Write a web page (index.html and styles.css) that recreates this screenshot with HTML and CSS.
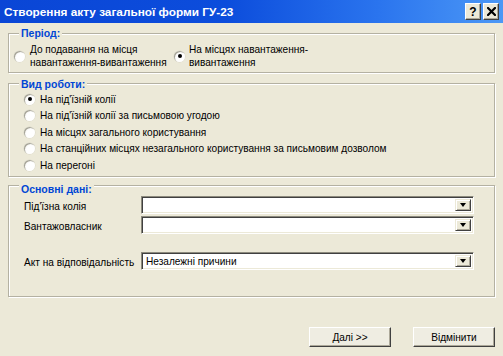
FILE: index.html
```html
<!DOCTYPE html>
<html lang="uk">
<head>
<meta charset="utf-8">
<title>Створення акту загальної форми ГУ-23</title>
<link rel="stylesheet" href="styles.css">
</head>
<body>
<div class="window">
  <div class="titlebar">
    <span class="title">Створення акту загальної форми ГУ-23</span>
    <div class="tb-buttons">
      <span class="tb-btn">?</span>
      <span class="tb-btn"><svg width="9" height="9" viewBox="0 0 9 9"><path d="M1 1L8 8M8 1L1 8" stroke="#000" stroke-width="2.2" stroke-linecap="square"/></svg></span>
    </div>
  </div>
  <div class="content">
    <div class="group g-period">
      <div class="legend">Період:</div>
      <div class="period-row">
        <div class="radio-item p1"><span class="radio"></span><span class="rtext">До подавання на місця<br>навантаження-вивантаження</span></div>
        <div class="radio-item p2"><span class="radio checked"></span><span class="rtext">На місцях навантаження-<br>вивантаження</span></div>
      </div>
    </div>
    <div class="group g-work">
      <div class="legend">Вид роботи:</div>
      <div class="options">
        <div class="radio-item opt"><span class="radio checked"></span><span>На під'їзній колії</span></div>
        <div class="radio-item opt"><span class="radio"></span><span>На під'їзній колії за письмовою угодою</span></div>
        <div class="radio-item opt"><span class="radio"></span><span>На місцях загального користування</span></div>
        <div class="radio-item opt"><span class="radio"></span><span>На станційних місцях незагального користування за письмовим дозволом</span></div>
        <div class="radio-item opt"><span class="radio"></span><span>На перегоні</span></div>
      </div>
    </div>
    <div class="group g-main">
      <div class="legend">Основні дані:</div>
      <div class="fields">
        <div class="field"><span class="flabel">Під'їзна колія</span><div class="combo"><span class="ctext"></span><span class="dd"></span></div></div>
        <div class="field"><span class="flabel">Вантажовласник</span><div class="combo"><span class="ctext"></span><span class="dd"></span></div></div>
        <div class="field f-gap"><span class="flabel">Акт на відповідальність</span><div class="combo"><span class="ctext">Незалежні причини</span><span class="dd"></span></div></div>
      </div>
    </div>
    <div class="footer">
      <button class="btn">Далі &gt;&gt;</button>
      <button class="btn">Відмінити</button>
    </div>
  </div>
</div>
</body>
</html>
```
FILE: styles.css
```css
* { box-sizing: border-box; }
html, body { margin: 0; padding: 0; }
body {
  font-family: "Liberation Sans", Arial, sans-serif;
  font-size: 10.1px;
  color: #000;
  background: #ece9d8;
  white-space: nowrap;
}
.window {
  width: 503px;
  height: 356px;
  background: #ece9d8;
  overflow: hidden;
}
.titlebar {
  height: 23px;
  display: flex;
  align-items: center;
  justify-content: space-between;
  padding: 0 4px 0 4px;
  background: linear-gradient(to right, #0a46d6 0%, #0c4ddc 45%, #2a74ee 75%, #4c98f6 100%);
}
.title {
  color: #fff;
  font-weight: bold;
  font-size: 11.8px;
  padding-top: 1px;
}
.tb-buttons {
  display: flex;
  gap: 2px;
}
.tb-btn {
  width: 16px;
  height: 17px;
  display: flex;
  align-items: center;
  justify-content: center;
  background: #ece9d8;
  border: 1px solid;
  border-color: #fff #404040 #404040 #fff;
  box-shadow: inset -1px -1px 0 #aca899;
  font-weight: bold;
  font-size: 12px;
  line-height: 1;
}
.content {
  padding: 10px 8px 0 8px;
}
.group {
  border: 1px solid #b4b1a2;
  box-shadow: inset 1px 1px 0 #fff, 1px 1px 0 #fff;
}
.legend {
  display: block;
  width: max-content;
  margin: -7px 0 0 10px;
  padding: 0 2px;
  line-height: 13px;
  height: 13px;
  background: #ece9d8;
  color: #0046d5;
  font-weight: bold;
  font-size: 10.5px;
}
.g-period {
  padding: 0 0 3px 0;
}
.period-row {
  display: flex;
  align-items: center;
  margin-top: 3px;
  padding-left: 5px;
}
.radio-item {
  display: flex;
  align-items: center;
  gap: 5px;
}
.p1 { width: 160px; }
.p2 { gap: 4px; }
.rtext { line-height: 13px; }
.radio {
  position: relative;
  flex: none;
  width: 11px;
  height: 11px;
  border-radius: 50%;
  background: radial-gradient(circle at 65% 65%, #fff 0%, #fff 45%, #e4e2d8 100%);
  box-shadow: inset 1px 1px 0 #a5a396, 0 0 0 0.5px #d8d6c8;
}
.radio.checked::after {
  content: "";
  position: absolute;
  left: 3.5px;
  top: 3.5px;
  width: 4px;
  height: 4px;
  border-radius: 50%;
  background: #000;
}
.g-work {
  margin-top: 10px;
  padding: 1px 0 2.5px 0;
}
.options { padding-left: 15px; }
.opt { height: 16.5px; }
.g-main {
  margin-top: 8px;
  padding: 4px 0 26px 0;
}
.fields { padding-left: 15px; }
.field {
  display: flex;
  align-items: center;
  height: 18px;
  margin-bottom: 2px;
}
.f-gap { margin-top: 18px; margin-bottom: 0; }
.flabel {
  width: 117px;
  padding-top: 2px;
}
.combo {
  width: 333px;
  height: 18px;
  display: flex;
  background: #fff;
  border: 1px solid;
  border-color: #8c8a7d #fff #fff #8c8a7d;
  box-shadow: inset 1px 1px 0 #404040, inset -1px -1px 0 #ece9d8;
  padding: 2px 2px 2px 2px;
}
.ctext {
  flex: 1;
  padding-left: 2px;
  line-height: 13px;
}
.dd {
  width: 16px;
  height: 100%;
  display: flex;
  align-items: center;
  justify-content: center;
  background: #ece9d8;
  border: 1px solid;
  border-color: #ece9d8 #404040 #404040 #ece9d8;
  box-shadow: inset 1px 1px 0 #fff, inset -1px -1px 0 #aca899;
}
.dd::after {
  content: "";
  border-left: 3.5px solid transparent;
  border-right: 3.5px solid transparent;
  border-top: 4px solid #000;
}
.footer {
  display: flex;
  justify-content: flex-end;
  gap: 22px;
  margin-top: 30px;
}
.btn {
  width: 82px;
  height: 20px;
  padding: 0;
  font-family: "Liberation Sans", Arial, sans-serif;
  font-size: 10.1px;
  color: #000;
  background: #efede2;
  border: 1px solid;
  border-color: #fff #404040 #404040 #fff;
  box-shadow: inset -1px -1px 0 #aca899;
}
```
